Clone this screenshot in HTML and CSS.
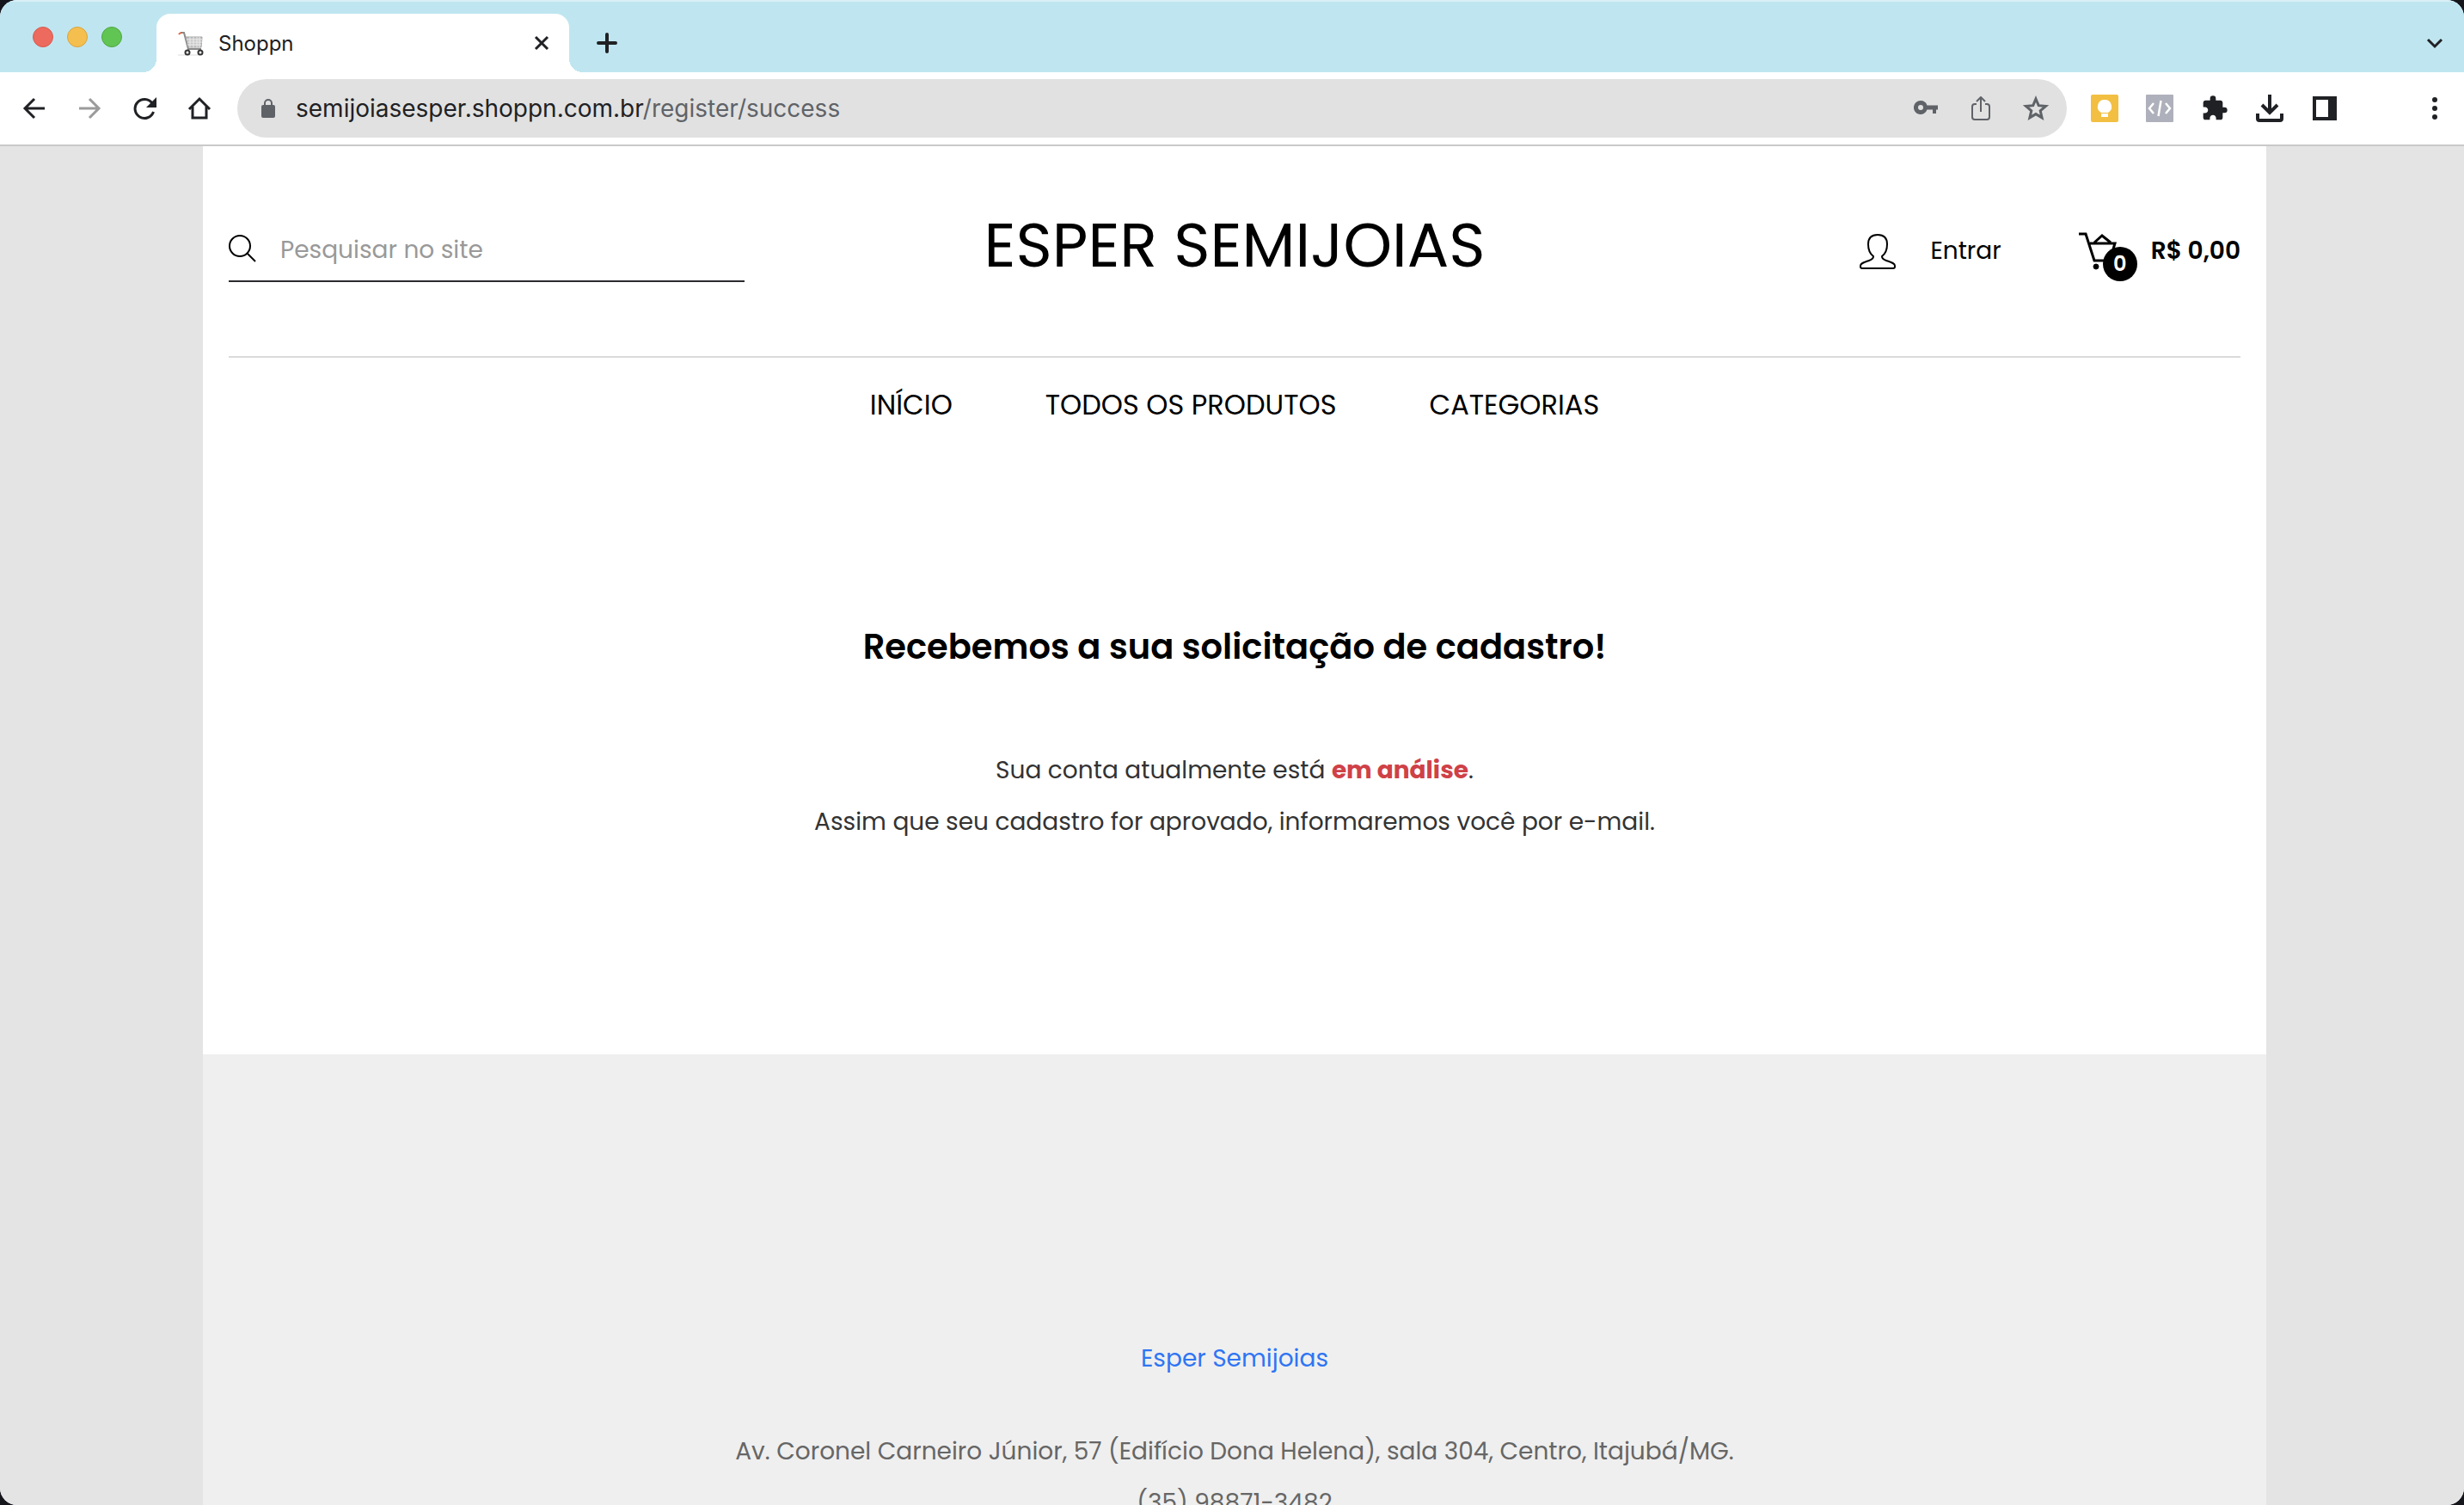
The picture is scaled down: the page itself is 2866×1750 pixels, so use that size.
FILE: index.html
```html
<!DOCTYPE html>
<html lang="pt-BR">
<head>
    <meta charset="UTF-8">
    <title>Shoppn</title>
    <link rel="stylesheet" href="styles.css">
</head>
<body>
    <div class="window">
        <div class="tabs">
            <div class="lights">
                <span class="light red"></span>
                <span class="light yellow"></span>
                <span class="light green"></span>
            </div>
            <div class="tab">
                <svg class="favicon" width="32" height="32" viewBox="0 0 32 32" fill="none">
                    <path d="M1 30h26" stroke="#ddd" stroke-width="1"/>
                    <path d="M4 4h4l5 19h15" stroke="#8a8a8a" stroke-width="2"/>
                    <path d="M10 9h19l-1 12H13z" fill="#c4c4c4" stroke="#a2a2a2"/>
                    <path d="M11 12h18M12 15h17M12 18h16M15 9v12M19 9v12M23 9v12M26 9v12" stroke="#ececec" stroke-width="1"/>
                    <path d="M2 6q1-2 4-2" stroke="#d8673f" stroke-width="2"/>
                    <circle cx="12" cy="27" r="2.500" stroke="#333" stroke-width="2"/>
                    <circle cx="27" cy="27" r="2.500" stroke="#333" stroke-width="2"/>
                </svg>
                <span class="tab-title">Shoppn</span>
                <button class="icon-btn small" aria-label="Fechar guia">
                    <svg width="18" height="18" viewBox="0 0 18 18"><path d="M2 2l14 14M16 2L2 16" stroke="#202124" stroke-width="3"/></svg>
                </button>
            </div>
            <button class="icon-btn new-tab" aria-label="Nova guia">
                <svg width="24" height="24" viewBox="0 0 24 24"><path d="M12 2v20M2 12h20" stroke="#202124" stroke-width="4" stroke-linecap="round"/></svg>
            </button>
            <button class="icon-btn tab-search" aria-label="Pesquisar guias">
                <svg width="20" height="14" viewBox="0 0 20 14" fill="none"><path d="M2 3l8 8 8-8" stroke="#202124" stroke-width="3"/></svg>
            </button>
        </div>

        <div class="toolbar">
            <div class="nav-icons">
                <button class="icon-btn" aria-label="Voltar">
                    <svg width="28" height="28" viewBox="0 0 28 28" fill="none" stroke="#202124" stroke-width="3"><path d="M26 14H3M14 3L3 14l11 11"/></svg>
                </button>
                <button class="icon-btn" aria-label="Avançar">
                    <svg width="28" height="28" viewBox="0 0 28 28" fill="none" stroke="#9b9b9b" stroke-width="3"><path d="M2 14h23M14 3l11 11-11 11"/></svg>
                </button>
                <button class="icon-btn" aria-label="Recarregar">
                    <svg width="28" height="28" viewBox="0 0 28 28"><path d="M23 8A11 11 0 1 0 24.500 18" fill="none" stroke="#202124" stroke-width="3"/><path d="M28 1v12H16z" fill="#202124"/></svg>
                </button>
                <button class="icon-btn" aria-label="Página inicial">
                    <svg width="28" height="28" viewBox="0 0 28 28" fill="none" stroke="#202124" stroke-width="3"><path d="M2 15L14 3l12 12"/><path d="M6 12v13h16V12"/></svg>
                </button>
            </div>
            <div class="address">
                <svg width="16" height="22" viewBox="0 0 16 22"><path d="M4 9V5a4 4 0 0 1 8 0v4" fill="none" stroke="#5f6368" stroke-width="2"/><rect y="7" width="16" height="15" rx="2" fill="#5f6368"/></svg>
                <div class="url">semijoiasesper.shoppn.com.br<span class="url-path">/register/success</span></div>
                <button class="icon-btn" aria-label="Senhas">
                    <svg width="28" height="28" viewBox="0 0 28 28" fill="#5f6368"><path d="M8 5a8 8 0 1 0 7.500 10.500H22V20h4v-4.500h2v-5H15.500A8 8 0 0 0 8 5zm0 5a3 3 0 1 1 0 6 3 3 0 0 1 0-6z"/></svg>
                </button>
                <button class="icon-btn" aria-label="Compartilhar">
                    <svg width="28" height="28" viewBox="0 0 28 28" fill="none" stroke="#5f6368" stroke-width="2"><path d="M9 9H7a3 3 0 0 0-3 3v12a3 3 0 0 0 3 3h14a3 3 0 0 0 3-3V12a3 3 0 0 0-3-3h-2M14 18V1M9 6l5-5 5 5"/></svg>
                </button>
                <button class="icon-btn" aria-label="Favoritar">
                    <svg width="32" height="32" viewBox="0 0 32 32" fill="none" stroke="#5f6368" stroke-width="3"><path d="M16 5l3.200 7.700 8.300.7-6.300 5.400 1.900 8.100-7.100-4.300-7.100 4.300 1.900-8.100-6.300-5.400 8.300-.7z"/></svg>
                </button>
            </div>
            <div class="extensions">
                <button class="icon-btn" aria-label="Keep">
                    <svg width="32" height="32" viewBox="0 0 32 32"><rect width="32" height="32" rx="2" fill="#f2bf42"/><path d="M16 6a8 8 0 0 0-4 15h8a8 8 0 0 0-4-15zM12 22h8v4h-8z" fill="#fff"/><path d="M12 21.500h8" stroke="#f2bf42"/></svg>
                </button>
                <button class="icon-btn" aria-label="Código">
                    <svg width="32" height="32" viewBox="0 0 32 32"><rect width="32" height="32" rx="1" fill="#aeb0bb"/><path d="M9 10l-5 6 5 6M23 10l5 6-5 6M17.500 7l-3 18" fill="none" stroke="#fff" stroke-width="2.500"/></svg>
                </button>
                <button class="icon-btn" aria-label="Extensões">
                    <svg width="32" height="32" viewBox="0 0 24 24" fill="#202124"><path d="M20.500 11H19V7c0-1.100-.9-2-2-2h-4V3.500a2.500 2.500 0 0 0-5 0V5H4c-1.100 0-2 .9-2 2v3.800h1.500c1.500 0 2.700 1.200 2.700 2.700S5 16.200 3.500 16.200H2V20c0 1.100.9 2 2 2h3.800v-1.500c0-1.500 1.200-2.700 2.700-2.700s2.700 1.200 2.700 2.700V22H17c1.100 0 2-.9 2-2v-4h1.500a2.500 2.500 0 0 0 0-5z"/></svg>
                </button>
                <button class="icon-btn" aria-label="Downloads">
                    <svg width="32" height="32" viewBox="0 0 32 32" fill="none" stroke="#202124" stroke-width="4"><path d="M16 0v21M7 12l9 9 9-9"/><path d="M2 22v6q0 2 2 2h24q2 0 2-2v-6"/></svg>
                </button>
                <button class="icon-btn" aria-label="Painel lateral">
                    <svg width="28" height="28" viewBox="0 0 28 28"><path d="M0 0h28v28H0zM4 4v20h14V4z" fill="#202124" fill-rule="evenodd"/></svg>
                </button>
                <span class="avatar"></span>
                <button class="icon-btn" aria-label="Menu">
                    <svg width="8" height="28" viewBox="0 0 8 28" fill="#202124"><circle cx="4" cy="4" r="3"/><circle cx="4" cy="14" r="3"/><circle cx="4" cy="24" r="3"/></svg>
                </button>
            </div>
        </div>

        <div class="viewport">
            <div class="page">
                <header class="header">
                    <div class="header-top">
                        <form class="search">
                            <label for="search" aria-label="Pesquisar">
                                <svg width="32" height="32" viewBox="0 0 32 32" fill="none" stroke="#000" stroke-width="2"><circle cx="13" cy="13" r="12"/><path d="M21 21l10 10"/></svg>
                            </label>
                            <input id="search" type="text" placeholder="Pesquisar no site">
                        </form>
                        <a class="brand" href="#">ESPER SEMIJOIAS</a>
                        <div class="account">
                            <a class="login" href="#">
                                <svg width="42" height="42" viewBox="0 0 42 42" fill="none" stroke="#000" stroke-width="2" stroke-linejoin="round"><path d="M21 2c-7 0-11 4-11 11 0 6 2 11 6 14 0 3-2 4-5 5-6 2-10 3-10 6v1q0 2 2 2h36q2 0 2-2v-1c0-3-4-4-10-6-3-1-5-2-5-5 4-3 6-8 6-14 0-7-4-11-11-11z"/></svg>
                                Entrar
                            </a>
                            <a class="cart" href="#">
                                <span class="cart-icon">
                                    <svg width="46" height="46" viewBox="0 0 46 46" fill="none" stroke="#000" stroke-width="3"><path d="M0 3h8l10 31h22M13 14h29l-6 20M18 13l9-8 10 8"/><circle cx="20" cy="41" r="3" fill="#000" stroke-width="1"/></svg>
                                    <span class="badge">0</span>
                                </span>
                                R$ 0,00
                            </a>
                        </div>
                    </div>
                    <nav class="menu">
                        <a href="#">INÍCIO</a>
                        <a href="#">TODOS OS PRODUTOS</a>
                        <a href="#">CATEGORIAS</a>
                    </nav>
                </header>
                <main class="message">
                    <h1>Recebemos a sua solicitação de cadastro!</h1>
                    <p>Sua conta atualmente está <strong>em análise</strong>.</p>
                    <p>Assim que seu cadastro for aprovado, informaremos você por e-mail.</p>
                </main>
                <footer class="footer">
                    <a href="#">Esper Semijoias</a>
                    <address>
                        Av. Coronel Carneiro Júnior, 57 (Edifício Dona Helena), sala 304, Centro, Itajubá/MG.<br>
                        (35) 98871-3482
                    </address>
                </footer>
            </div>
        </div>
    </div>
</body>
</html>
```
FILE: styles.css
```css
* {
    box-sizing: border-box;
}
body {
    margin: 0;
    background: #15151c;
    font-family: Poppins, Inter, "Liberation Sans", sans-serif;
    font-size: 28px;
    color: #000;
}
a {
    color: inherit;
    text-decoration: none;
}
svg {
    display: block;
    flex-shrink: 0;
}
.window {
    display: flex;
    flex-direction: column;
    height: 100vh;
    border-radius: 20px;
    overflow: hidden;
    background: #fff;
}

/* tab strip */
.tabs {
    display: flex;
    align-items: flex-end;
    height: 84px;
    border-top: 2px solid #d9f0f6;
    background: #bfe6f0;
    font-family: Inter, "Liberation Sans", sans-serif;
    flex-shrink: 0;
}
.lights {
    display: flex;
    gap: 16px;
    width: 182px;
    padding: 0 0 29px 38px;
}
.light {
    width: 24px;
    height: 24px;
    border-radius: 50%;
}
.red {
    background: #ed6a5e;
    border: 1px solid #d55b50;
}
.yellow {
    background: #f5bf4f;
    border: 1px solid #d9a33c;
}
.green {
    background: #61c554;
    border: 1px solid #51a73e;
}
.tab {
    position: relative;
    display: flex;
    align-items: center;
    width: 480px;
    height: 68px;
    padding: 0 16px 0 24px;
    border-radius: 16px 16px 0 0;
    background: #fff;
}
.tab::before,
.tab::after {
    content: "";
    position: absolute;
    bottom: 0;
    width: 16px;
    height: 16px;
}
.tab::before {
    left: -16px;
    background: radial-gradient(circle at 0 0, #bfe6f0 16px, #fff 16px);
}
.tab::after {
    right: -16px;
    background: radial-gradient(circle at 100% 0, #bfe6f0 16px, #fff 16px);
}
.tab-title {
    flex: 1;
    margin-left: 16px;
    font-size: 24px;
    color: #202124;
}
.icon-btn {
    display: flex;
    align-items: center;
    justify-content: center;
    width: 64px;
    height: 64px;
    padding: 0;
    border: 0;
    background: none;
    flex-shrink: 0;
}
.icon-btn.small {
    width: 32px;
    height: 32px;
}
.new-tab {
    margin-left: 12px;
    height: 68px;
}
.tab-search {
    margin-left: auto;
    margin-right: 2px;
    height: 68px;
}

/* toolbar */
.toolbar {
    display: flex;
    align-items: center;
    height: 86px;
    border-bottom: 2px solid #c9c9c9;
    font-family: Inter, "Liberation Sans", sans-serif;
    flex-shrink: 0;
}
.nav-icons {
    display: flex;
    padding: 0 12px 0 8px;
}
.address {
    display: flex;
    align-items: center;
    flex: 1;
    height: 68px;
    padding: 0 4px 0 28px;
    border-radius: 34px;
    background: #e1e1e1;
}
.url {
    flex: 1;
    margin-left: 24px;
    color: #202124;
}
.url-path {
    color: #5f6368;
}
.extensions {
    display: flex;
    align-items: center;
    padding: 0 2px 0 12px;
}
.avatar {
    width: 64px;
}

/* shop page */
.viewport {
    flex: 1;
    overflow: hidden;
    padding-left: 6px;
    background: #e4e4e4;
}
.page {
    display: flex;
    flex-direction: column;
    max-width: 2400px;
    min-height: 100%;
    margin: 0 auto;
    background: #fff;
}
.header {
    padding: 0 30px;
}
.header-top {
    display: grid;
    grid-template-columns: 1fr auto 1fr;
    align-items: center;
    height: 246px;
    border-bottom: 2px solid #dadada;
}
.search {
    display: flex;
    align-items: center;
    width: 100%;
    max-width: 600px;
    height: 72px;
    border-bottom: 2px solid #2b2b2f;
}
.search label {
    padding-bottom: 4px;
}
.search input {
    flex: 1;
    height: 60px;
    padding: 0;
    margin-left: 28px;
    border: 0;
    outline: 0;
    background: none;
    font: inherit;
}
.search input::placeholder {
    color: #999;
}
.brand {
    padding-bottom: 14px;
    font-size: 72px;
    line-height: 108px;
}
.account {
    display: flex;
    align-items: center;
    justify-content: flex-end;
    gap: 90px;
}
.login {
    display: flex;
    align-items: center;
    gap: 40px;
}
.cart {
    display: flex;
    align-items: center;
    gap: 38px;
    font-weight: 600;
}
.cart-icon {
    position: relative;
}
.badge {
    position: absolute;
    left: 28px;
    top: 18px;
    width: 40px;
    height: 40px;
    border-radius: 50%;
    background: #000;
    color: #fff;
    font-size: 24px;
    line-height: 40px;
    text-align: center;
}
.menu {
    display: flex;
    justify-content: center;
    gap: 108px;
    padding: 31px 0 33px;
    font-size: 32px;
    line-height: 48px;
}
.message {
    padding: 194px 30px 240px;
    text-align: center;
    line-height: 60px;
    color: #333;
}
.message h1 {
    margin: 0 0 84px;
    font-size: 40px;
    font-weight: 600;
    color: #000;
}
.message p {
    margin: 0;
}
.message strong {
    font-weight: 700;
    color: #cf4147;
}
.footer {
    flex: 1;
    padding: 324px 30px 60px;
    background: #efefef;
    text-align: center;
    line-height: 60px;
    color: #666;
}
.footer a {
    color: #2f75f3;
}
.footer address {
    margin-top: 48px;
    font-style: normal;
}
```
